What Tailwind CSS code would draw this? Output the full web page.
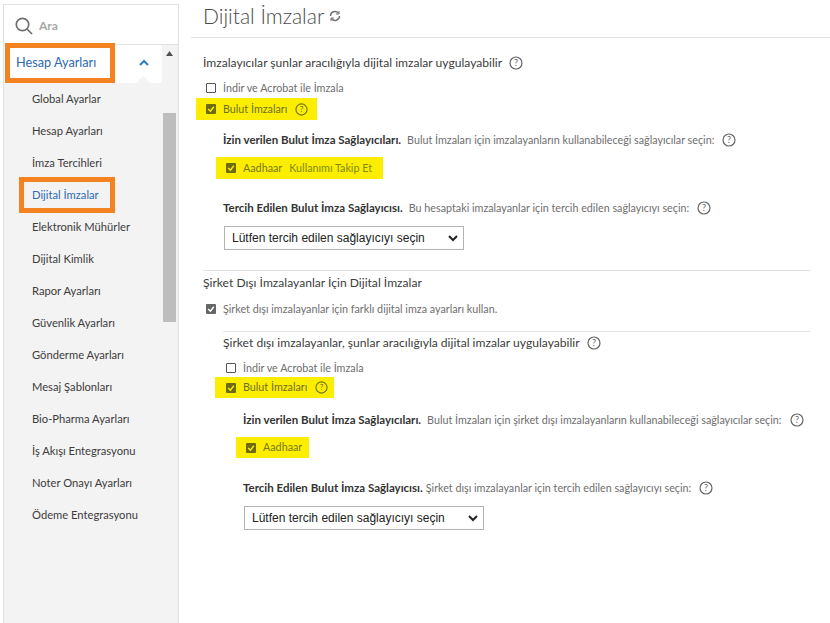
<!DOCTYPE html>
<html lang="tr">
<head>
    <meta charset="UTF-8">
    <title>Dijital İmzalar</title>
    <script src="https://cdn.jsdelivr.net/npm/@tailwindcss/browser@4"></script>
</head>
<body class="bg-white">
    <div class="w-[830px] h-[623px] overflow-hidden flex font-['Lato','Noto_Sans',sans-serif] text-[#4b4b4b]">
        <!-- sidebar -->
        <aside class="relative w-[176px] ml-[3px] mt-[4px] h-[619px] shrink-0 border-x border-t border-[#e1e1e1] bg-[#f3f3f3] flex flex-col">
            <div class="h-[40px] shrink-0 bg-white border-b border-[#e1e1e1] flex items-center pl-[11px] pt-[2px] gap-[6px]">
                <svg width="18" height="18" viewBox="0 0 18 18" fill="none" stroke="#707070" stroke-width="1.7"><circle cx="7.5" cy="7.5" r="6.2"/><path d="M12 12l5 5"/></svg>
                <span class="text-[12px] font-bold text-[#a8a8a8]">Ara</span>
            </div>
            <div class="flex flex-1 min-h-0">
                <div class="flex-1 min-w-0">
                    <div class="h-[38px] bg-white flex items-center justify-between pl-[12px] pr-[13px] pb-[3px] text-[12.7px] text-[#2d6ab0]">
                        <span>Hesap Ayarları</span>
                        <svg width="10" height="7" viewBox="0 0 10 7" fill="none" stroke="#2d7fc4" stroke-width="2"><path d="M1 6l4-4 4 4"/></svg>
                    </div>
                    <ul class="text-[11.2px] text-[#3c3c3c] pl-[28px]">
                        <li class="h-[32px] flex items-center">Global Ayarlar</li>
                        <li class="h-[32px] flex items-center">Hesap Ayarları</li>
                        <li class="h-[32px] flex items-center">İmza Tercihleri</li>
                        <li class="h-[32px] flex items-center text-[#2d6ab0]">Dijital İmzalar</li>
                        <li class="h-[32px] flex items-center">Elektronik Mühürler</li>
                        <li class="h-[32px] flex items-center">Dijital Kimlik</li>
                        <li class="h-[32px] flex items-center">Rapor Ayarları</li>
                        <li class="h-[32px] flex items-center">Güvenlik Ayarları</li>
                        <li class="h-[32px] flex items-center">Gönderme Ayarları</li>
                        <li class="h-[32px] flex items-center">Mesaj Şablonları</li>
                        <li class="h-[32px] flex items-center">Bio-Pharma Ayarları</li>
                        <li class="h-[32px] flex items-center">İş Akışı Entegrasyonu</li>
                        <li class="h-[32px] flex items-center">Noter Onayı Ayarları</li>
                        <li class="h-[32px] flex items-center">Ödeme Entegrasyonu</li>
                    </ul>
                </div>
                <div class="w-[16px] shrink-0 flex flex-col items-start pl-[1px]">
                    <svg class="mt-[6px] ml-[3px]" width="7" height="5" viewBox="0 0 7 5"><path d="M3.5 0L7 5H0z" fill="#505050"/></svg>
                    <div class="mt-[57px] w-[13px] h-[209px] bg-[#bdbdbd]"></div>
                </div>
            </div>
            <!-- notch under the open section -->
            <svg class="absolute left-[132px] top-[71px]" width="14" height="7" viewBox="0 0 14 7"><path d="M7 0l7 7H0z" fill="#f3f3f3"/></svg>
            <!-- orange highlights -->
            <div class="absolute left-[1px] top-[38px] w-[110px] h-[40px] border-[5px] border-[#f58220]"></div>
            <div class="absolute left-[15px] top-[172px] w-[96px] h-[36px] border-[5px] border-[#f58220]"></div>
        </aside>

        <!-- main -->
        <main class="ml-[12px] flex-1 min-w-0">
            <header class="h-[38px] border-b border-[#e3e3e3] pl-[12px] flex items-center gap-[5px] pb-[5px]">
                <h1 class="text-[21px] font-light text-[#4b4b4b]">Dijital İmzalar</h1>
                <svg width="12" height="12" viewBox="0 0 12 12" fill="none" stroke="#707070" stroke-width="1.4"><path d="M1.5 6a4.5 4.5 0 0 1 8-2.8M10.5 6a4.5 4.5 0 0 1-8 2.8"/><path d="M10 1v3H7M2 11V8h3" stroke-width="1"/></svg>
            </header>

            <section class="pl-[12px] pr-[20px] pt-[16px]">
                <p class="h-[18px] flex items-center gap-[7px] text-[12.1px] text-[#3c3c3c]">İmzalayıcılar şunlar aracılığıyla dijital imzalar uygulayabilir
                    <svg width="14" height="14" viewBox="0 0 14 14"><circle cx="7" cy="7" r="6" fill="none" stroke="#666" stroke-width="1.2"/><text x="7" y="10" text-anchor="middle" font-size="9" fill="#666">?</text></svg>
                </p>
                <label class="mt-[8px] h-[16px] flex items-center gap-[7px] text-[10.75px] text-[#6e6e6e]">
                    <span class="ml-[3px] w-[10px] h-[10px] border-[1.5px] border-[#555] rounded-[1px]"></span>İndir ve Acrobat ile İmzala
                </label>
                <div class="mt-[2px] -ml-[7px] w-[121px] h-[22px] bg-[#fdee00] flex items-center gap-[7px] pl-[10px] text-[10.75px] text-[#6e6e1e]">
                    <svg width="10" height="10" viewBox="0 0 9 9"><rect width="9" height="9" rx="1" fill="#6e6a10"/><path d="M2 4.5l2 2 3-4" fill="none" stroke="#fdee00" stroke-width="1.3"/></svg>
                    <span>Bulut İmzaları</span>
                    <svg class="ml-[1px]" width="13" height="13" viewBox="0 0 14 14"><circle cx="7" cy="7" r="6" fill="none" stroke="#6e6e1e" stroke-width="1.2"/><text x="7" y="10" text-anchor="middle" font-size="9" fill="#6e6e1e">?</text></svg>
                </div>

                <div class="pl-[20px]">
                    <p class="mt-[11px] h-[18px] flex items-center text-[10.75px] text-[#6e6e6e] whitespace-nowrap"><b class="font-bold text-[11.5px] text-[#333]">İzin verilen Bulut İmza Sağlayıcıları.</b><span class="ml-[6px]">Bulut İmzaları için imzalayanların kullanabileceği sağlayıcılar seçin:</span>
                        <svg class="ml-[8px]" width="14" height="14" viewBox="0 0 14 14"><circle cx="7" cy="7" r="6" fill="none" stroke="#666" stroke-width="1.2"/><text x="7" y="10" text-anchor="middle" font-size="9" fill="#666">?</text></svg>
                    </p>
                    <div class="mt-[8px] -ml-[7px] w-[167px] h-[22px] bg-[#fdee00] flex items-center pl-[10px] text-[10.75px] text-[#7c8a10]">
                        <svg width="10" height="10" viewBox="0 0 9 9"><rect width="9" height="9" rx="1" fill="#6e6a10"/><path d="M2 4.5l2 2 3-4" fill="none" stroke="#fdee00" stroke-width="1.3"/></svg>
                        <span class="ml-[7px] text-[#77781c]">Aadhaar</span><span class="ml-[7px]">Kullanımı Takip Et</span>
                    </div>
                    <p class="mt-[20px] h-[18px] flex items-center text-[10.75px] text-[#6e6e6e] whitespace-nowrap"><b class="font-bold text-[11.5px] text-[#333]">Tercih Edilen Bulut İmza Sağlayıcısı.</b><span class="ml-[6px]">Bu hesaptaki imzalayanlar için tercih edilen sağlayıcıyı seçin:</span>
                        <svg class="ml-[8px]" width="14" height="14" viewBox="0 0 14 14"><circle cx="7" cy="7" r="6" fill="none" stroke="#666" stroke-width="1.2"/><text x="7" y="10" text-anchor="middle" font-size="9" fill="#666">?</text></svg>
                    </p>
                    <div class="mt-[9px] ml-[1px] w-[240px] h-[24px] border border-[#b4b4b4] bg-white flex items-center justify-between pl-[7px] pr-[5px] text-[12px] font-['Liberation_Sans',sans-serif] text-[#222]">
                        <span>Lütfen tercih edilen sağlayıcıyı seçin</span>
                        <svg width="10" height="7" viewBox="0 0 10 7" fill="none" stroke="#222" stroke-width="2"><path d="M1 1l4 4 4-4"/></svg>
                    </div>
                </div>

                <div class="mt-[20px] border-t border-[#e3e3e3] pt-[3px]">
                    <p class="h-[18px] flex items-center text-[12.1px] text-[#3c3c3c]">Şirket Dışı İmzalayanlar İçin Dijital İmzalar</p>
                    <label class="mt-[9px] h-[16px] flex items-center gap-[7px] text-[10.75px] text-[#6e6e6e]">
                        <svg class="ml-[3px]" width="10" height="10" viewBox="0 0 9 9"><rect width="9" height="9" rx="1" fill="#666"/><path d="M2 4.5l2 2 3-4" fill="none" stroke="#fff" stroke-width="1.3"/></svg>Şirket dışı imzalayanlar için farklı dijital imza ayarları kullan.
                    </label>
                    <div class="ml-[20px] mt-[14px] border-t border-[#e3e3e3] pt-[2px]">
                        <p class="h-[18px] flex items-center gap-[7px] text-[12.1px] text-[#3c3c3c]">Şirket dışı imzalayanlar, şunlar aracılığıyla dijital imzalar uygulayabilir
                            <svg width="14" height="14" viewBox="0 0 14 14"><circle cx="7" cy="7" r="6" fill="none" stroke="#666" stroke-width="1.2"/><text x="7" y="10" text-anchor="middle" font-size="9" fill="#666">?</text></svg>
                        </p>
                        <label class="mt-[8px] h-[16px] flex items-center gap-[7px] text-[10.75px] text-[#6e6e6e]">
                            <span class="ml-[3px] w-[10px] h-[10px] border-[1.5px] border-[#555] rounded-[1px]"></span>İndir ve Acrobat ile İmzala
                        </label>
                        <div class="mt-[1px] -ml-[8px] w-[119px] h-[21px] bg-[#fdee00] flex items-center gap-[7px] pl-[11px] text-[10.75px] text-[#6e6e1e]">
                            <svg width="10" height="10" viewBox="0 0 9 9"><rect width="9" height="9" rx="1" fill="#6e6a10"/><path d="M2 4.5l2 2 3-4" fill="none" stroke="#fdee00" stroke-width="1.3"/></svg>
                            <span>Bulut İmzaları</span>
                            <svg class="ml-[1px]" width="13" height="13" viewBox="0 0 14 14"><circle cx="7" cy="7" r="6" fill="none" stroke="#6e6e1e" stroke-width="1.2"/><text x="7" y="10" text-anchor="middle" font-size="9" fill="#6e6e1e">?</text></svg>
                        </div>
                        <div class="pl-[20px]">
                            <p class="mt-[13px] h-[18px] flex items-center text-[10.75px] text-[#6e6e6e] whitespace-nowrap"><b class="font-bold text-[11.5px] text-[#333]">İzin verilen Bulut İmza Sağlayıcıları.</b><span class="ml-[6px]">Bulut İmzaları için şirket dışı imzalayanların kullanabileceği sağlayıcılar seçin:</span>
                                <svg class="ml-[8px]" width="14" height="14" viewBox="0 0 14 14"><circle cx="7" cy="7" r="6" fill="none" stroke="#666" stroke-width="1.2"/><text x="7" y="10" text-anchor="middle" font-size="9" fill="#666">?</text></svg>
                            </p>
                            <div class="mt-[8px] -ml-[7px] w-[73px] h-[21px] bg-[#fdee00] flex items-center pl-[10px] text-[10.75px] text-[#77781c]">
                                <svg width="10" height="10" viewBox="0 0 9 9"><rect width="9" height="9" rx="1" fill="#6e6a10"/><path d="M2 4.5l2 2 3-4" fill="none" stroke="#fdee00" stroke-width="1.3"/></svg>
                                <span class="ml-[7px]">Aadhaar</span>
                            </div>
                            <p class="mt-[21px] h-[18px] flex items-center text-[10.75px] text-[#6e6e6e] whitespace-nowrap"><b class="font-bold text-[11.5px] text-[#333]">Tercih Edilen Bulut İmza Sağlayıcısı.</b><span class="ml-[3px]">Şirket dışı imzalayanlar için tercih edilen sağlayıcıyı seçin:</span>
                                <svg class="ml-[8px]" width="14" height="14" viewBox="0 0 14 14"><circle cx="7" cy="7" r="6" fill="none" stroke="#666" stroke-width="1.2"/><text x="7" y="10" text-anchor="middle" font-size="9" fill="#666">?</text></svg>
                            </p>
                            <div class="mt-[9px] ml-[1px] w-[240px] h-[24px] border border-[#b4b4b4] bg-white flex items-center justify-between pl-[7px] pr-[5px] text-[12px] font-['Liberation_Sans',sans-serif] text-[#222]">
                                <span>Lütfen tercih edilen sağlayıcıyı seçin</span>
                                <svg width="10" height="7" viewBox="0 0 10 7" fill="none" stroke="#222" stroke-width="2"><path d="M1 1l4 4 4-4"/></svg>
                            </div>
                        </div>
                    </div>
                </div>
            </section>
        </main>
    </div>
</body>
</html>
